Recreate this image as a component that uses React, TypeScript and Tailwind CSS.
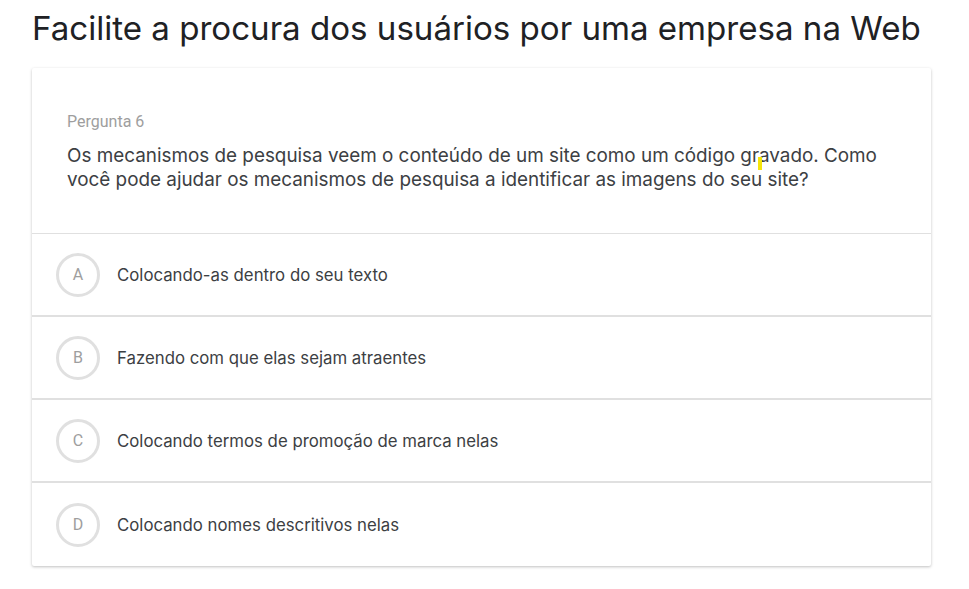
const options = [
  { letter: "A", text: "Colocando-as dentro do seu texto" },
  { letter: "B", text: "Fazendo com que elas sejam atraentes" },
  { letter: "C", text: "Colocando termos de promoção de marca nelas" },
  { letter: "D", text: "Colocando nomes descritivos nelas" },
];

export default function App() {
  return (
    <main className="min-h-screen bg-white font-['Inter',sans-serif] text-[#202124]">
      <div className="pl-8 pr-[38px]">
        <h1 className="whitespace-nowrap pt-[6px] text-[33.1px] leading-[44px] text-[#202124]">
          Facilite a procura dos usuários por uma empresa na Web
        </h1>

        <div className="mt-[18px] rounded-[2px] bg-white shadow-[0_1px_3px_rgba(0,0,0,0.25)]">
          <div className="relative border-b border-[#e0e0e0] px-[35px] pb-[41px] pt-[42px]">
            <p className="font-['Roboto',sans-serif] text-[16px] leading-[24px] text-[#9e9e9e]">
              Pergunta 6
            </p>
            <p className="mt-[10px] whitespace-nowrap text-[18.87px] leading-[24px] text-[#3c4043]">
              Os mecanismos de pesquisa veem o conteúdo de um site como um código gravado. Como
              <br />
              você pode ajudar os mecanismos de pesquisa a identificar as imagens do seu site?
            </p>
            <span className="absolute left-[726px] top-[89px] h-[13px] w-[4px] bg-[#f5e50a]" />
          </div>

          {options.map((option, i) => (
            <div
              key={option.letter}
              className={
                i < options.length - 1
                  ? "flex h-[83px] items-center gap-[17px] border-b-2 border-[#e0e0e0] px-6"
                  : "flex h-[83px] items-center gap-[17px] px-6"
              }
            >
              <div className="flex h-11 w-11 shrink-0 items-center justify-center rounded-full border-[3px] border-[#e0e0e0] font-['Roboto',sans-serif] text-[16px] text-[#9e9e9e]">
                {option.letter}
              </div>
              <span className="pt-[3px] text-[16.8px] text-[#3c4043]">{option.text}</span>
            </div>
          ))}
        </div>
      </div>
    </main>
  );
}
